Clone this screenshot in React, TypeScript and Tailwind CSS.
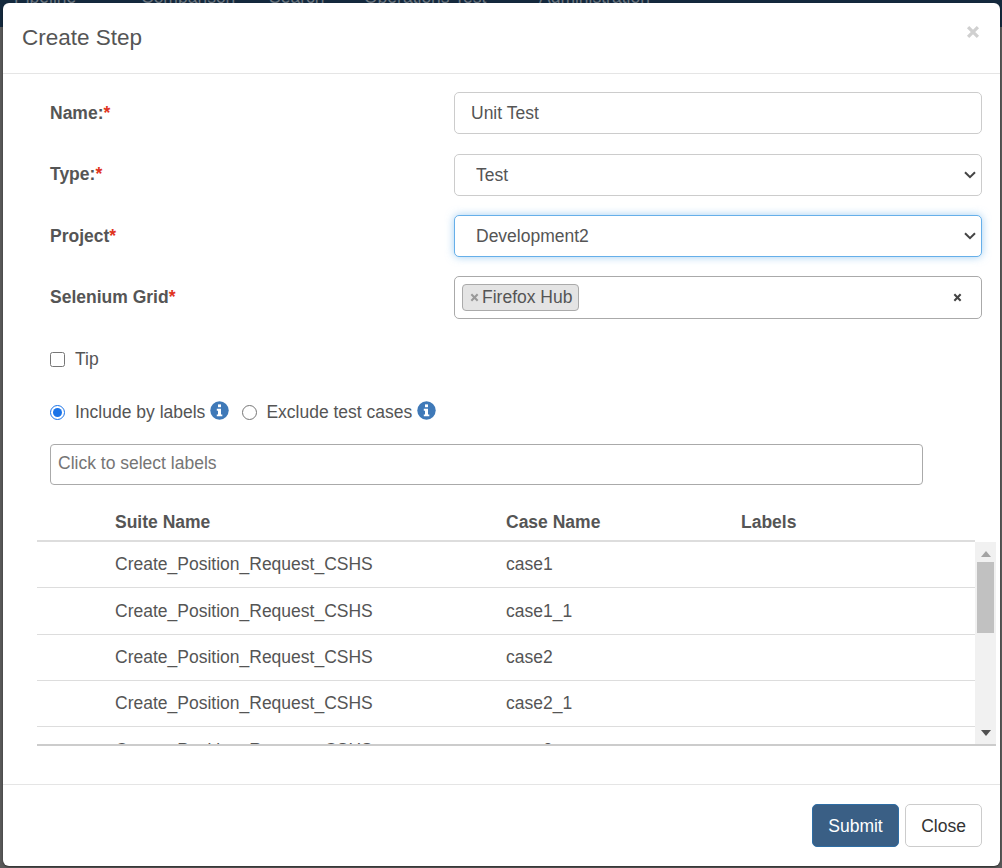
import React from "react";

const rows = ["case1", "case1_1", "case2", "case2_1", "case3"];

function Info() {
  return (
    <svg width="19" height="19" viewBox="0 0 19 19" className="shrink-0">
      <circle cx="9.5" cy="9.5" r="9.2" fill="#3f79b8" />
      <rect x="8" y="3.4" width="3" height="2.8" fill="#fff" />
      <path d="M6.8 7.8h4.2v5.6h1.3v1.9H6.8v-1.9H8v-3.7H6.8z" fill="#fff" />
    </svg>
  );
}

function X({ size, color }: { size: number; color: string }) {
  return (
    <svg width={size} height={size} viewBox="0 0 10 10" className="shrink-0">
      <path d="M1.5 1.5l7 7M8.5 1.5l-7 7" stroke={color} strokeWidth="2.3" fill="none" />
    </svg>
  );
}

function Chevron() {
  return (
    <svg width="12" height="8" viewBox="0 0 12 8" className="absolute right-[6px] top-[17px] pointer-events-none">
      <path d="M1 1.2l5 5 5-5" stroke="#444" strokeWidth="2" fill="none" />
    </svg>
  );
}

function Label({ children, up }: { children: React.ReactNode; up?: boolean }) {
  return <div className={up ? "w-[404px] shrink-0 font-bold text-[#555] pb-[2px]" : "w-[404px] shrink-0 font-bold text-[#555]"}>{children}</div>;
}

const Req = () => <span className="text-[#e0341e]">*</span>;

export default function App() {
  return (
    <div
      className="relative w-[1002px] h-[868px] overflow-hidden bg-[#595959] text-[#555] text-[17.5px] leading-[24px]"
      style={{ fontFamily: '"Liberation Sans", Arial, sans-serif' }}
    >
      <div className="h-[42px] bg-[#14293d] text-[#6b7680] -mt-[15px] pl-[14px] flex">
        <span className="w-[127px]">Pipeline</span>
        <span className="w-[128px]">Comparison</span>
        <span className="w-[95px]">Search</span>
        <span className="w-[175px]">Operations Test</span>
        <span>Administration</span>
      </div>

      <div className="absolute left-[3px] top-[3px] w-[997px] h-[863px] bg-white rounded-[6px] flex flex-col shadow-[0_1px_2px_rgba(0,0,0,0.5)]">
        <div className="h-[71px] shrink-0 border-b border-[#e5e5e5] flex items-center justify-between pl-[19px] pr-[20px]">
          <span className="text-[22.5px] leading-[32px] text-[#555] -mt-[1px]">Create Step</span>
          <span className="-mt-[13px]"><X size={14} color="#d0d0d0" /></span>
        </div>

        <div className="flex-1 pl-[47px] flex flex-col">
          <div className="flex items-center h-[42px] mt-[18px]">
            <Label>Name:<Req /></Label>
            <input
              readOnly
              value="Unit Test"
              className="w-[528px] h-[42px] border border-[#ccc] rounded-[5px] px-[16px] text-[#555] outline-none"
            />
          </div>
          <div className="flex items-center h-[42px] mt-[20px]">
            <Label up>Type:<Req /></Label>
            <div className="relative w-[528px] h-[42px]">
              <select className="w-full h-full appearance-none border border-[#ccc] rounded-[5px] pl-[21px] bg-white text-[#555] outline-none">
                <option>Test</option>
              </select>
              <Chevron />
            </div>
          </div>
          <div className="flex items-center h-[42px] mt-[19px]">
            <Label>Project<Req /></Label>
            <div className="relative w-[528px] h-[42px]">
              <select className="w-full h-full appearance-none border border-[#66afe9] rounded-[5px] pl-[21px] bg-white text-[#555] outline-none shadow-[0_0_8px_rgba(102,175,233,0.6)]">
                <option>Development2</option>
              </select>
              <Chevron />
            </div>
          </div>
          <div className="flex items-center h-[43px] mt-[19px]">
            <Label up>Selenium Grid<Req /></Label>
            <div className="w-[528px] h-[43px] border border-[#aaa] rounded-[5px] flex items-center pl-[7px] pr-[19px] justify-between">
              <div className="h-[27px] border border-[#aaa] rounded-[4px] bg-[#e4e4e4] flex items-center pl-[7px] pr-[6px] gap-[3px]">
                <X size={9} color="#999" />
                <span className="text-[#555] pb-[2px]">Firefox Hub</span>
              </div>
              <X size={9} color="#444" />
            </div>
          </div>

          <label className="flex items-center h-[24px] mt-[28px] gap-[10px]">
            <input type="checkbox" className="w-[15px] h-[15px] m-0 appearance-auto" />
            <span>Tip</span>
          </label>

          <div className="flex items-center h-[24px] mt-[29px]">
            <input type="radio" name="mode" defaultChecked className="w-[15px] h-[15px] m-0 appearance-auto accent-[#1a73e8]" />
            <span className="ml-[10px]">Include by labels</span>
            <span className="ml-[5px] -mt-[3px]"><Info /></span>
            <input type="radio" name="mode" className="ml-[13px] w-[15px] h-[15px] m-0 appearance-auto" />
            <span className="ml-[9px]">Exclude test cases</span>
            <span className="ml-[5px] -mt-[3px]"><Info /></span>
          </div>

          <input
            readOnly
            placeholder="Click to select labels"
            className="w-[873px] h-[41px] mt-[20px] border border-[#aaa] rounded-[4px] px-[7px] pb-[2px] outline-none placeholder:text-[#757575]"
          />

          <div className="-ml-[13px] mt-[18px] w-[959px]">
            <div className="flex h-[39px] w-[938px] items-center font-bold border-b-2 border-[#ddd] pl-[78px] pt-[1px]">
              <span className="w-[391px]">Suite Name</span>
              <span className="w-[235px]">Case Name</span>
              <span>Labels</span>
            </div>
            <div className="flex h-[204px] overflow-hidden border-b-2 border-[#ccc]">
              <div className="w-[938px] shrink-0">
                {rows.map((c) => (
                  <div key={c} className="flex h-[46.33px] items-center border-b border-[#ddd] pl-[78px] pb-[0.5px]">
                    <span className="w-[391px]">Create_Position_Request_CSHS</span>
                    <span>{c}</span>
                  </div>
                ))}
              </div>
              <div className="w-[21px] bg-[#f1f1f1] flex flex-col items-center">
                <svg width="10" height="6" viewBox="0 0 10 6" className="mt-[9px]"><path d="M5 0L10 6H0z" fill="#a3a3a3" /></svg>
                <div className="w-[17px] h-[71px] mt-[5px] bg-[#c1c1c1]" />
                <svg width="10" height="6" viewBox="0 0 10 6" className="mt-auto mb-[8px]"><path d="M0 0H10L5 6z" fill="#505050" /></svg>
              </div>
            </div>
          </div>
        </div>

        <div className="h-[82px] shrink-0 border-t border-[#e5e5e5] flex justify-end items-start gap-[6px] pt-[19px] pr-[18px]">
          <button className="w-[87px] h-[43px] rounded-[5px] bg-[#3a5f85] border border-[#2e6da4] text-white">Submit</button>
          <button className="w-[77px] h-[43px] rounded-[5px] bg-white border border-[#ccc] text-[#333]">Close</button>
        </div>
      </div>
    </div>
  );
}
